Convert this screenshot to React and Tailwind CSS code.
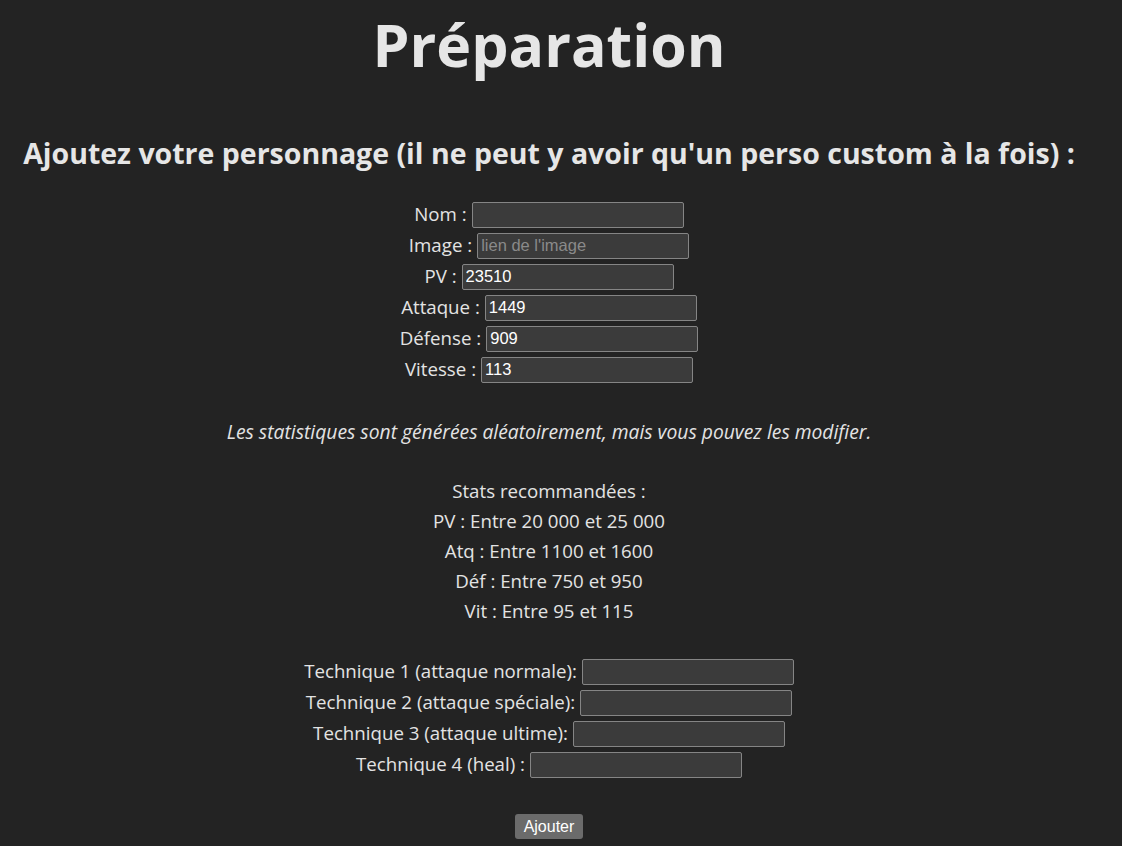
import React from "react";

const font = { fontFamily: "'Open Sans', 'Noto Sans', sans-serif" };

function Row({ label, value, placeholder }) {
  return (
    <div className="flex h-[31px] items-center justify-center">
      <span className="mr-[5px]">{label}</span>
      <input
        defaultValue={value}
        placeholder={placeholder}
        className="h-[26px] w-[212px] rounded-[2px] border border-[#858585] bg-[#3b3b3b] px-[3px] text-[16.5px] text-white placeholder:text-[#8a8a8a] outline-none"
        style={{ fontFamily: "'Liberation Sans', Arial, sans-serif" }}
      />
    </div>
  );
}

export default function App() {
  return (
    <div className="min-h-[846px] w-full bg-[#232323]">
      <div
        className="w-[1098px] text-[18.7px] text-[#e3e3e3]"
        style={font}
      >
        <h1 className="pt-[4px] text-center text-[59px] font-bold leading-[80px] text-[#e6e6e6]">
          Préparation
        </h1>
        <h2 className="mt-[49px] text-center text-[28.5px] font-bold leading-[40px] text-[#e6e6e6]">
          Ajoutez votre personnage (il ne peut y avoir qu'un perso custom à la fois) :
        </h2>
        <div className="mt-[26px]">
          <Row label="Nom :" value="" />
          <Row label="Image :" placeholder="lien de l'image" />
          <Row label="PV :" value="23510" />
          <Row label="Attaque :" value="1449" />
          <Row label="Défense :" value="909" />
          <Row label="Vitesse :" value="113" />
        </div>
        <p className="mt-[31px] text-center text-[19.3px] italic leading-[31px]">
          Les statistiques sont générées aléatoirement, mais vous pouvez les modifier.
        </p>
        <div className="mt-[29px] text-center leading-[30px]">
          <div>Stats recommandées :</div>
          <div>PV : Entre 20 000 et 25 000</div>
          <div>Atq : Entre 1100 et 1600</div>
          <div>Déf : Entre 750 et 950</div>
          <div>Vit : Entre 95 et 115</div>
        </div>
        <div className="mt-[30px]">
          <Row label="Technique 1 (attaque normale):" />
          <Row label="Technique 2 (attaque spéciale):" />
          <Row label="Technique 3 (attaque ultime):" />
          <Row label="Technique 4 (heal) :" />
        </div>
        <div className="mt-[34px] flex justify-center">
          <button
            className="h-[25px] rounded-[3px] bg-[#6b6b6b] px-[9px] text-[16px] leading-[25px] text-white"
            style={{ fontFamily: "'Liberation Sans', Arial, sans-serif" }}
          >
            Ajouter
          </button>
        </div>
      </div>
    </div>
  );
}
